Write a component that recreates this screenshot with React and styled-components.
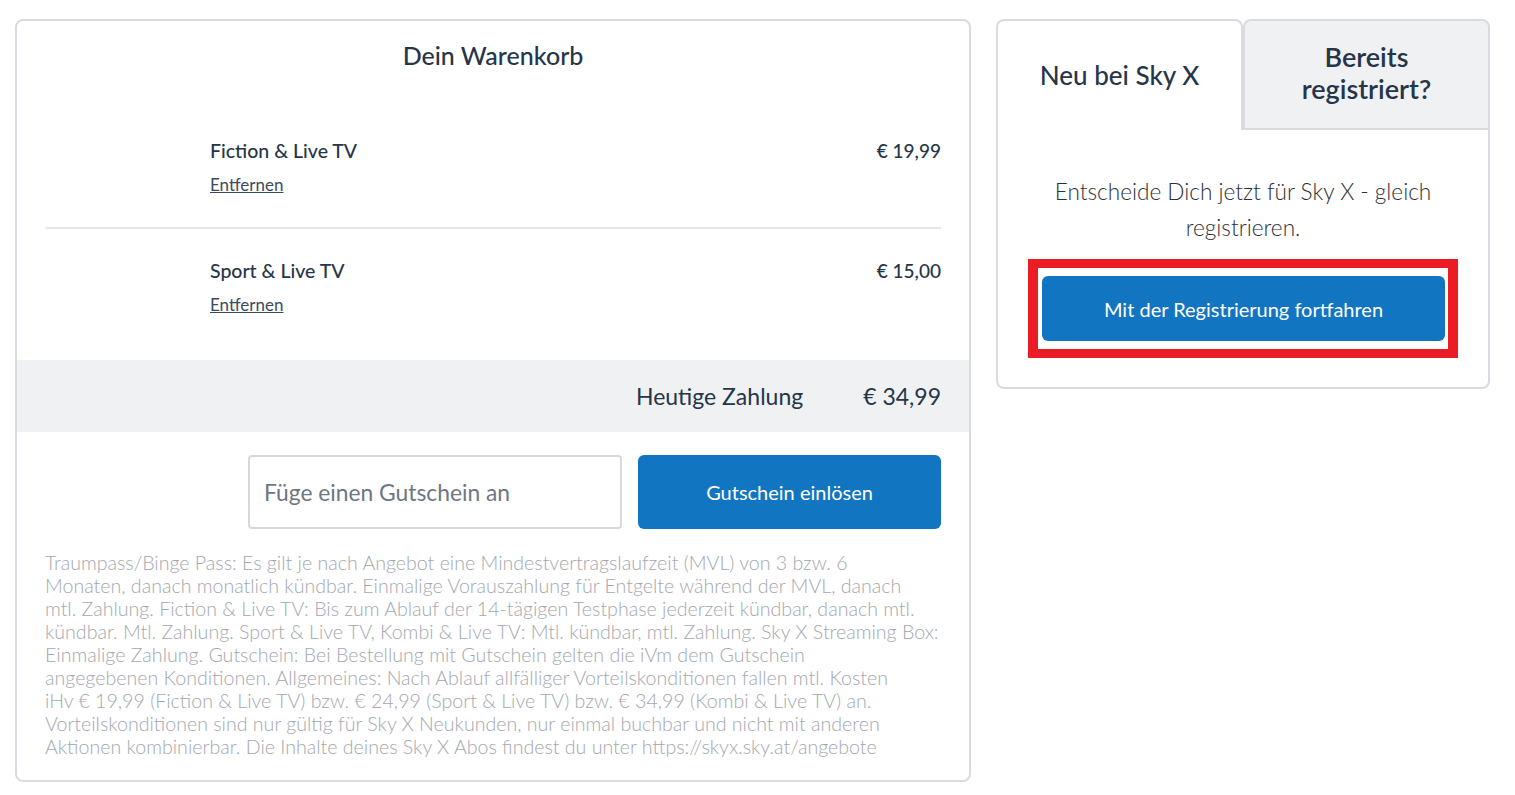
import React from "react";
import styled, { createGlobalStyle } from "styled-components";

const Global = createGlobalStyle`
  html, body { margin: 0; padding: 0; background: #fff; }
  body { font-family: Lato, "Noto Sans", Arial, sans-serif; color: #263548; }
  * { box-sizing: border-box; }
`;

const Page = styled.div`
  display: flex;
  align-items: flex-start;
  gap: 25px;
  padding: 19px 0 0 15px;
`;

const Card = styled.div`
  width: 956px;
  border: 2px solid #dadbe0;
  border-radius: 8px;
  background: #fff;
  overflow: hidden;
`;

const Title = styled.h2`
  margin: 0;
  padding-top: 19px;
  font-size: 25px;
  line-height: 30px;
  font-weight: 500;
  text-align: center;
  color: #263548;
`;

const Items = styled.div`
  padding: 38px 28px 12px;
`;

const Item = styled.div`
  display: flex;
  justify-content: space-between;
  align-items: flex-start;
  padding: ${(p) => (p.$first ? "31px 0 32px 165px" : "30px 0 33px 165px")};
  border-top: ${(p) => (p.$first ? "none" : "2px solid #e6e7ea")};
`;

const ItemInfo = styled.div`
  display: flex;
  flex-direction: column;
  gap: 12px;
`;

const ItemName = styled.div`
  font-size: 19.5px;
  line-height: 24px;
  font-weight: 500;
  color: #263548;
`;

const Remove = styled.a`
  font-size: 17px;
  line-height: 20px;
  color: #3b4a5c;
  text-decoration: underline;
  cursor: pointer;
`;

const Price = styled.div`
  font-size: 19px;
  line-height: 24px;
  font-weight: 500;
  color: #263548;
`;

const TotalBand = styled.div`
  display: flex;
  justify-content: flex-end;
  align-items: center;
  gap: 60px;
  height: 72px;
  padding: 0 28px;
  background: #f0f1f3;
  font-size: 23px;
  color: #263548;
`;

const Coupon = styled.div`
  display: flex;
  justify-content: flex-end;
  gap: 16px;
  padding: 23px 28px 0;
`;

const Input = styled.input`
  width: 374px;
  height: 74px;
  border: 2px solid #d7d8dc;
  border-radius: 4px;
  padding: 0 14px;
  font-family: inherit;
  font-size: 22.8px;
  color: #263548;
  &::placeholder { color: #6e7682; }
`;

const Button = styled.button`
  width: ${(p) => p.$w || "303px"};
  height: ${(p) => p.$h || "74px"};
  border: none;
  border-radius: 6px;
  background: #1275c2;
  color: #fff;
  font-family: inherit;
  font-size: 20px;
  cursor: pointer;
`;

const Disclaimer = styled.p`
  margin: 0;
  padding: 22px 28px 22px;
  font-family: Lato, "Open Sans", sans-serif;
  font-size: 19.6px;
  line-height: 23px;
  font-weight: 300;
  color: #a4a7af;
  white-space: nowrap;
`;

const Side = styled.div`
  width: 494px;
`;

const Tabs = styled.div`
  display: flex;
`;

const Tab = styled.div`
  flex: 1;
  height: 111px;
  display: flex;
  align-items: center;
  justify-content: center;
  text-align: center;
  border: 2px solid #dadbe0;
  border-bottom: ${(p) => (p.$active ? "none" : "2px solid #dadbe0")};
  border-radius: 8px 8px 0 0;
  background: ${(p) => (p.$active ? "#fff" : "#f0f1f3")};
  font-size: ${(p) => (p.$active ? "26px" : "27px")};
  line-height: 32px;
  font-weight: ${(p) => (p.$active ? 500 : 600)};
  color: #263548;
  padding-bottom: ${(p) => (p.$active ? "2px" : "4px")};
`;

const SideBody = styled.div`
  border: 2px solid #dadbe0;
  border-top: none;
  border-radius: 0 0 8px 8px;
  padding: 44px 30px 29px;
  display: flex;
  flex-direction: column;
  align-items: center;
`;

const Lead = styled.p`
  margin: 0 0 13px;
  font-size: 22.6px;
  line-height: 36px;
  font-weight: 300;
  text-align: center;
  color: #2c2f36;
`;

const Highlight = styled.div`
  align-self: stretch;
  border: 10px solid #ec1c24;
  border-top-width: 9px;
  border-bottom-width: 9px;
  padding: 8px 3px 8px 4px;
`;

const disclaimerLines = [
  "Traumpass/Binge Pass: Es gilt je nach Angebot eine Mindestvertragslaufzeit (MVL) von 3 bzw. 6",
  "Monaten, danach monatlich kündbar. Einmalige Vorauszahlung für Entgelte während der MVL, danach",
  "mtl. Zahlung. Fiction & Live TV: Bis zum Ablauf der 14-tägigen Testphase jederzeit kündbar, danach mtl.",
  "kündbar. Mtl. Zahlung. Sport & Live TV, Kombi & Live TV: Mtl. kündbar, mtl. Zahlung. Sky X Streaming Box:",
  "Einmalige Zahlung. Gutschein: Bei Bestellung mit Gutschein gelten die iVm dem Gutschein",
  "angegebenen Konditionen. Allgemeines: Nach Ablauf allfälliger Vorteilskonditionen fallen mtl. Kosten",
  "iHv € 19,99 (Fiction & Live TV) bzw. € 24,99 (Sport & Live TV) bzw. € 34,99 (Kombi & Live TV) an.",
  "Vorteilskonditionen sind nur gültig für Sky X Neukunden, nur einmal buchbar und nicht mit anderen",
  "Aktionen kombinierbar. Die Inhalte deines Sky X Abos findest du unter https://skyx.sky.at/angebote",
];

const items = [
  { name: "Fiction & Live TV", price: "€ 19,99" },
  { name: "Sport & Live TV", price: "€ 15,00" },
];

export default function App() {
  return (
    <>
      <Global />
      <Page>
        <Card>
          <Title>Dein Warenkorb</Title>
          <Items>
            {items.map((it, i) => (
              <Item key={it.name} $first={i === 0}>
                <ItemInfo>
                  <ItemName>{it.name}</ItemName>
                  <Remove>Entfernen</Remove>
                </ItemInfo>
                <Price>{it.price}</Price>
              </Item>
            ))}
          </Items>
          <TotalBand>
            <span>Heutige Zahlung</span>
            <span>€ 34,99</span>
          </TotalBand>
          <Coupon>
            <Input placeholder="Füge einen Gutschein an" />
            <Button>Gutschein einlösen</Button>
          </Coupon>
          <Disclaimer>
            {disclaimerLines.map((l, i) => (
              <React.Fragment key={i}>
                {l}
                {i < disclaimerLines.length - 1 && <br />}
              </React.Fragment>
            ))}
          </Disclaimer>
        </Card>
        <Side>
          <Tabs>
            <Tab $active>Neu bei Sky X</Tab>
            <Tab>
              Bereits
              <br />
              registriert?
            </Tab>
          </Tabs>
          <SideBody>
            <Lead>
              Entscheide Dich jetzt für Sky X - gleich
              <br />
              registrieren.
            </Lead>
            <Highlight>
              <Button $w="100%" $h="65px">Mit der Registrierung fortfahren</Button>
            </Highlight>
          </SideBody>
        </Side>
      </Page>
    </>
  );
}
